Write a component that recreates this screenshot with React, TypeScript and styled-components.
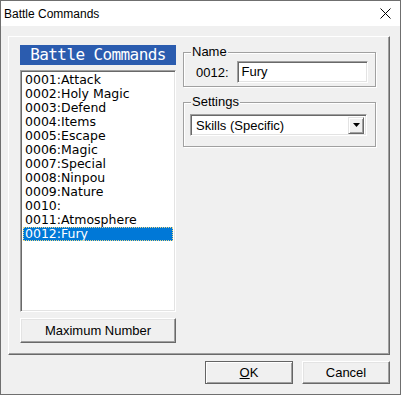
import React from "react";
import styled, { createGlobalStyle } from "styled-components";

const commands = [
  "0001:Attack",
  "0002:Holy Magic",
  "0003:Defend",
  "0004:Items",
  "0005:Escape",
  "0006:Magic",
  "0007:Special",
  "0008:Ninpou",
  "0009:Nature",
  "0010:",
  "0011:Atmosphere",
  "0012:Fury",
];

const GlobalStyle = createGlobalStyle`
  html, body {
    margin: 0;
    padding: 0;
    background: #3c3c3c;
  }
  body {
    font-family: "Liberation Sans", Arial, sans-serif;
    font-size: 13px;
    color: #000;
  }
`;

const Window = styled.div`
  width: 401px;
  height: 395px;
  box-sizing: border-box;
  border: 1px solid #6f6f6f;
  background: #f0f0f0;
  display: flex;
  flex-direction: column;
`;

const TitleBar = styled.div`
  height: 25px;
  flex: none;
  background: #fff;
  display: flex;
  align-items: center;
  justify-content: space-between;
  padding: 0 9px 0 3px;
  font-size: 12px;
`;

const Client = styled.div`
  flex: 1;
  display: flex;
  flex-direction: column;
  padding: 10px 10px 0 7px;
`;

const Frame = styled.div`
  height: 319px;
  box-sizing: border-box;
  border: 1px solid;
  border-color: #fff #696969 #696969 #fff;
  box-shadow: inset -1px -1px 0 #a0a0a0;
  padding: 8px 0 0 11px;
  display: flex;
  gap: 7px;
`;

const LeftColumn = styled.div`
  width: 156px;
  display: flex;
  flex-direction: column;
`;

const Header = styled.div`
  height: 20px;
  background: #2b5caf;
  color: #fff;
  font-family: "DejaVu Sans Mono", "Liberation Mono", monospace;
  font-size: 16px;
  letter-spacing: -0.6px;
  line-height: 20px;
  text-align: center;
`;

const sunken = `
  box-sizing: border-box;
  border: 1px solid;
  border-color: #a0a0a0 #fff #fff #a0a0a0;
  box-shadow: inset 1px 1px 0 #696969, inset -1px -1px 0 #e3e3e3;
  background: #fff;
`;

const List = styled.div`
  ${sunken}
  margin-top: 5px;
  height: 242px;
  padding: 2px;
  font-family: "DejaVu Sans", Verdana, sans-serif;
  font-size: 12.5px;
`;

const Row = styled.div<{ $selected?: boolean }>`
  height: 14px;
  line-height: 14px;
  padding-left: 2px;
  box-sizing: border-box;
  white-space: nowrap;
  background: ${(p) => (p.$selected ? "#0078d7" : "transparent")};
  color: ${(p) => (p.$selected ? "#fff" : "#000")};
  outline: ${(p) => (p.$selected ? "1px dotted #e8d98a" : "none")};
  outline-offset: -1px;
`;

const Button = styled.button<{ $width?: number; $default?: boolean }>`
  width: ${(p) => (p.$width ? `${p.$width}px` : "100%")};
  height: ${(p) => (p.$default !== undefined ? "23px" : "25px")};
  box-sizing: border-box;
  padding: 0;
  background: #f0f0f0;
  font-family: "Liberation Sans", Arial, sans-serif;
  font-size: 13px;
  color: #000;
  border: 1px solid;
  border-color: ${(p) =>
    p.$default ? "#646464" : "#fff #696969 #696969 #fff"};
  box-shadow: ${(p) =>
    p.$default
      ? "inset 1px 1px 0 #fff, inset -1px -1px 0 #a0a0a0"
      : "inset -1px -1px 0 #a0a0a0, inset 1px 1px 0 #e3e3e3"};
`;

const MaxButton = styled(Button)`
  margin-top: 6px;
`;

const RightColumn = styled.div`
  width: 193px;
  display: flex;
  flex-direction: column;
`;

const Group = styled.div<{ $height: number; $top: number }>`
  position: relative;
  box-sizing: border-box;
  height: ${(p) => p.$height}px;
  margin-top: ${(p) => p.$top}px;
  border: 1px solid #a0a0a0;
  box-shadow: inset 1px 1px 0 #fff, 1px 1px 0 #fff;
  display: flex;
  align-items: flex-start;
`;

const Legend = styled.span`
  position: absolute;
  top: -9px;
  left: 7px;
  padding: 0 1px;
  background: #f0f0f0;
  line-height: 16px;
`;

const NameRow = styled.div`
  display: flex;
  align-items: center;
  margin: 8px 0 0 12px;
  gap: 8px;
`;

const TextInput = styled.div`
  ${sunken}
  width: 131px;
  height: 22px;
  line-height: 20px;
  padding-left: 4px;
`;

const Combo = styled.div`
  ${sunken}
  margin: 11px 0 0 6px;
  width: 177px;
  height: 22px;
  display: flex;
  align-items: center;
  justify-content: space-between;
  padding: 2px 2px 2px 5px;
`;

const ComboArrow = styled.div`
  width: 16px;
  height: 17px;
  box-sizing: border-box;
  background: #f0f0f0;
  border: 1px solid;
  border-color: #e3e3e3 #696969 #696969 #e3e3e3;
  box-shadow: inset 1px 1px 0 #fff, inset -1px -1px 0 #a0a0a0;
  display: flex;
  align-items: center;
  justify-content: center;
`;

const Footer = styled.div`
  display: flex;
  justify-content: flex-end;
  gap: 9px;
  margin-top: 6px;
`;

export default function App() {
  return (
    <>
      <GlobalStyle />
      <Window>
        <TitleBar>
          <span>Battle Commands</span>
          <svg width="11" height="11" viewBox="0 0 11 11">
            <path d="M0.5 0.5L10.5 10.5M10.5 0.5L0.5 10.5" stroke="#000" strokeWidth="1" />
          </svg>
        </TitleBar>
        <Client>
          <Frame>
            <LeftColumn>
              <Header>Battle Commands</Header>
              <List>
                {commands.map((c, i) => (
                  <Row key={c} $selected={i === commands.length - 1}>
                    {c}
                  </Row>
                ))}
              </List>
              <MaxButton>Maximum Number</MaxButton>
            </LeftColumn>
            <RightColumn>
              <Group $height={35} $top={7}>
                <Legend>Name</Legend>
                <NameRow>
                  <span>0012:</span>
                  <TextInput>Fury</TextInput>
                </NameRow>
              </Group>
              <Group $height={45} $top={15}>
                <Legend>Settings</Legend>
                <Combo>
                  <span>Skills (Specific)</span>
                  <ComboArrow>
                    <svg width="7" height="4" viewBox="0 0 7 4">
                      <path d="M0 0H7L3.5 4Z" fill="#000" />
                    </svg>
                  </ComboArrow>
                </Combo>
              </Group>
            </RightColumn>
          </Frame>
          <Footer>
            <Button $width={88} $default>
              <u>O</u>K
            </Button>
            <Button $width={88} $default={false}>
              Cancel
            </Button>
          </Footer>
        </Client>
      </Window>
    </>
  );
}
